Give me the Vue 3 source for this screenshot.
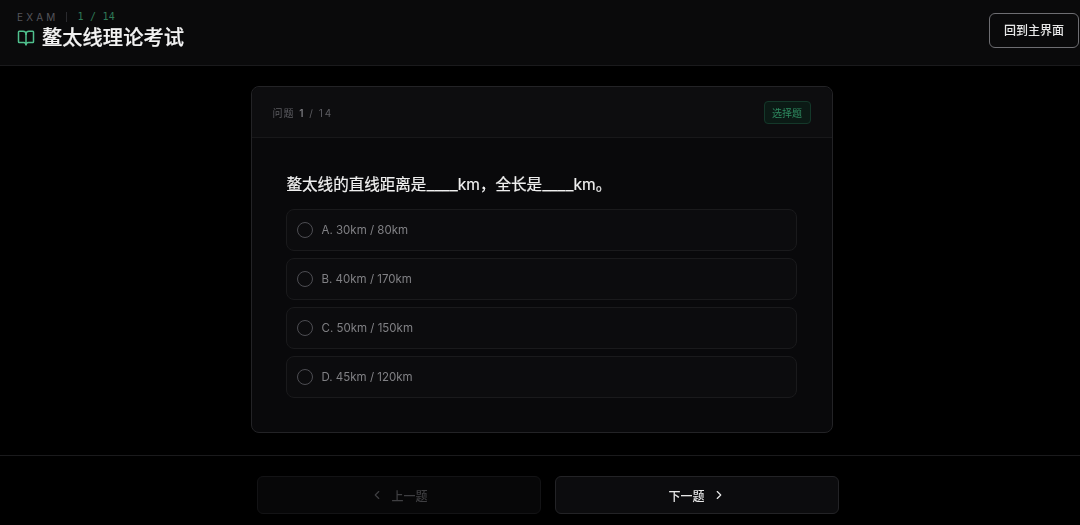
<script setup>
const options = [
  'A. 30km / 80km',
  'B. 40km / 170km',
  'C. 50km / 150km',
  'D. 45km / 120km'
]
</script>

<template>
  <div class="page">
    <header class="topbar">
      <div class="heading">
        <div class="meta">
          <span class="exam">EXAM</span>
          <span class="sep"></span>
          <span class="count">1 / 14</span>
        </div>
        <div class="title-row">
          <svg class="book" width="18" height="18" viewBox="0 0 24 24" fill="none" stroke="currentColor" stroke-width="2" stroke-linecap="round" stroke-linejoin="round">
            <path d="M12 7v14" />
            <path d="M3 18a1 1 0 0 1-1-1V4a1 1 0 0 1 1-1h5a4 4 0 0 1 4 4 4 4 0 0 1 4-4h5a1 1 0 0 1 1 1v13a1 1 0 0 1-1 1h-6a3 3 0 0 0-3 3 3 3 0 0 0-3-3z" />
          </svg>
          <h1>鳌太线理论考试</h1>
        </div>
      </div>
      <button class="home-btn">回到主界面</button>
    </header>

    <main class="content">
      <section class="card">
        <div class="card-head">
          <span class="progress">问题 <b>1</b> / <i>14</i></span>
          <span class="tag">选择题</span>
        </div>
        <div class="card-body">
          <p class="question">鳌太线的直线距离是<span class="blank">____</span>km，全长是<span class="blank">____</span>km。</p>
          <div class="options">
            <div v-for="opt in options" :key="opt" class="option">
              <span class="radio"></span>
              <span class="label">{{ opt }}</span>
            </div>
          </div>
        </div>
      </section>
    </main>

    <footer class="footer">
      <button class="nav prev">
        <svg width="14" height="14" viewBox="0 0 24 24" fill="none" stroke="currentColor" stroke-width="2" stroke-linecap="round" stroke-linejoin="round"><path d="m15 18-6-6 6-6" /></svg>
        <span>上一题</span>
      </button>
      <button class="nav next">
        <span>下一题</span>
        <svg width="14" height="14" viewBox="0 0 24 24" fill="none" stroke="currentColor" stroke-width="2" stroke-linecap="round" stroke-linejoin="round"><path d="m9 18 6-6-6-6" /></svg>
      </button>
    </footer>
  </div>
</template>

<style>
html,
body {
  margin: 0;
  background: #000;
}
</style>

<style scoped>
.page {
  width: 1080px;
  height: 525px;
  overflow: hidden;
  display: flex;
  flex-direction: column;
  will-change: opacity;
  font-family: Inter, "Noto Sans CJK SC", sans-serif;
}

.topbar {
  height: 65px;
  flex: none;
  display: flex;
  align-items: center;
  justify-content: space-between;
  padding: 0 1px 0 17px;
  background: #0a0a0b;
  border-bottom: 1px solid #1a1a1c;
  box-sizing: content-box;
}

.heading {
  display: flex;
  flex-direction: column;
  margin-top: -4px;
}

.meta {
  display: flex;
  align-items: center;
  height: 14px;
  font-size: 10px;
}

.exam {
  color: #55555b;
  letter-spacing: 3.2px;
}

.sep {
  width: 1px;
  height: 10px;
  background: #2a2a2e;
  margin: 0 11px 0 7px;
}

.count {
  color: #2f7a58;
  font-family: "DejaVu Sans Mono", monospace;
  letter-spacing: 0.2px;
}

.title-row {
  display: flex;
  align-items: center;
  gap: 7px;
}

.book {
  color: #4fc08d;
}

h1 {
  margin: 0;
  font-size: 20.3px;
  line-height: 28px;
  font-weight: 500;
  -webkit-text-stroke: 0.2px #f2f2f2;
  color: #f2f2f2;
}

.home-btn {
  width: 90px;
  height: 35px;
  padding: 0 0 2px;
  margin-top: -4px;
  background: transparent;
  border: 1px solid #6e6e72;
  border-radius: 6px;
  color: #e8e8e8;
  font-family: inherit;
  font-size: 12px;
  font-weight: 500;
}

.content {
  flex: 1;
  display: flex;
  justify-content: center;
  padding-top: 20px;
}

.card {
  width: 582px;
  height: 347px;
  box-sizing: border-box;
  background: #09090b;
  border: 1px solid #232326;
  border-radius: 8px;
  margin-left: 3px;
}

.card-head {
  height: 50px;
  display: flex;
  align-items: center;
  justify-content: space-between;
  padding: 0 21px;
  background: #0d0d0f;
  border-bottom: 1px solid #18181a;
  border-radius: 8px 8px 0 0;
}

.progress {
  font-size: 10px;
  color: #5c5c61;
  letter-spacing: 1px;
}

.progress b {
  color: #77777c;
  font-weight: 600;
  margin: 0 1px;
}

.progress i {
  font-style: normal;
  letter-spacing: 2px;
  margin-left: 1px;
}

.tag {
  width: 47px;
  height: 23px;
  box-sizing: border-box;
  display: flex;
  align-items: center;
  justify-content: center;
  font-size: 10px;
  color: #2e8a60;
  background: #0b1a15;
  border: 1px solid #14382a;
  border-radius: 4px;
}

.card-body {
  padding: 35px 35px 0 34px;
}

.question {
  margin: 0 0 12px 1px;
  font-size: 15.55px;
  line-height: 24px;
  font-weight: 400;
  -webkit-text-stroke: 0.2px #f0f0f0;
  color: #f0f0f0;
}

.blank {
  font-size: 17.2px;
  line-height: 0;
  -webkit-text-stroke: 0;
}

.options {
  display: flex;
  flex-direction: column;
  gap: 7px;
}

.option {
  height: 42px;
  box-sizing: border-box;
  display: flex;
  align-items: center;
  gap: 9px;
  padding: 0 10px;
  background: #0c0c0e;
  border: 1px solid #1a1a1c;
  border-radius: 8px;
}

.radio {
  width: 14px;
  height: 14px;
  flex: none;
  border: 1px solid #4d4d52;
  border-radius: 50%;
}

.label {
  font-size: 11.5px;
  color: #808084;
}

.footer {
  height: 70px;
  flex: none;
  display: flex;
  justify-content: center;
  align-items: flex-start;
  gap: 14px;
  padding: 20px 0 0 16px;
  box-sizing: border-box;
  border-top: 1px solid #1a1a1c;
}

.nav {
  width: 284px;
  height: 38px;
  display: flex;
  align-items: center;
  justify-content: center;
  gap: 7px;
  padding: 0;
  border-radius: 6px;
  font-family: inherit;
  font-size: 12px;
  font-weight: 500;
}

.prev {
  background: #070708;
  border: 1px solid #131315;
  color: #3f3f42;
}

.next {
  background: #0c0c0e;
  border: 1px solid #232326;
  color: #e8e8e8;
}
</style>
